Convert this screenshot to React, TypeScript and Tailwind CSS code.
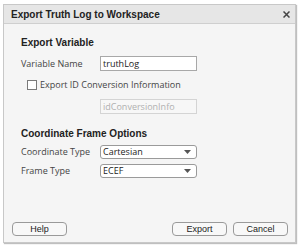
import React from "react";

function Caret() {
  return (
    <svg width="7" height="4" viewBox="0 0 7 4" className="shrink-0">
      <path d="M0 0 L7 0 L3.5 4 Z" fill="#555" />
    </svg>
  );
}

function Dropdown({ value }: { value: string }) {
  return (
    <div className="flex h-[14px] w-[97px] items-center justify-between rounded-[3px] border border-[#9a9a9a] bg-white pl-[2px] pr-[5px] text-[9px] leading-none text-[#222]">
      <span>{value}</span>
      <Caret />
    </div>
  );
}

function Button({ label, className = "" }: { label: string; className?: string }) {
  return (
    <div
      className={`flex h-[14px] w-[55px] items-center justify-center rounded-[4px] border border-[#9a9a9a] bg-[#f8f8f8] text-[9px] leading-none text-[#222] ${className}`}
    >
      {label}
    </div>
  );
}

export default function App() {
  return (
    <div className="h-[246px] w-[300px] bg-white pl-[3px] pt-[4px] [font-family:'Open_Sans','Liberation_Sans',sans-serif]">
      <div className="flex h-[239px] w-[293px] flex-col border border-[#c8c8c8] bg-[#f5f5f5] shadow-[1px_1px_1px_rgba(0,0,0,0.25)]">
        <div className="flex h-[19px] items-center justify-between border-b border-[#cfcfcf] bg-[#e6e6e6] pl-[7px] pr-[5px] [font-family:'Liberation_Sans',sans-serif]">
          <span className="text-[10px] font-bold text-[#222]">Export Truth Log to Workspace</span>
          <svg width="7" height="7" viewBox="0 0 7 7">
            <path d="M0.5 0.5 L6.5 6.5 M6.5 0.5 L0.5 6.5" stroke="#444" strokeWidth="1.5" />
          </svg>
        </div>

        <div className="flex flex-1 flex-col pl-[17px] pt-[14px]">
          <div className="text-[10px] font-bold leading-none text-[#222] [font-family:'Liberation_Sans',sans-serif]">
            Export Variable
          </div>
          <div className="mt-[8px] flex items-center">
            <span className="w-[79px] text-[9px] text-[#444]">Variable Name</span>
            <div className="flex h-[15px] w-[97px] items-center border border-[#a8a8a8] bg-white pl-[2px] text-[9px] leading-none text-[#222]">
              truthLog
            </div>
          </div>
          <div className="mt-[7px] flex items-center pl-[6px]">
            <div className="h-[10px] w-[10px] border border-[#7a7a7a] bg-white" />
            <span className="ml-[3px] text-[9px] text-[#444]">Export ID Conversion Information</span>
          </div>
          <div className="ml-[79px] mt-[7px] flex h-[15px] w-[97px] items-center border border-[#d4d4d4] bg-[#f7f7f7] pl-[2px] text-[9px] leading-none text-[#b0b0b0]">
            idConversionInfo
          </div>

          <div className="mt-[15px] text-[10px] font-bold leading-none text-[#222] [font-family:'Liberation_Sans',sans-serif]">
            Coordinate Frame Options
          </div>
          <div className="mt-[6px] flex items-center">
            <span className="w-[79px] text-[9px] text-[#444]">Coordinate Type</span>
            <Dropdown value="Cartesian" />
          </div>
          <div className="mt-[5px] flex items-center">
            <span className="w-[79px] text-[9px] text-[#444]">Frame Type</span>
            <Dropdown value="ECEF" />
          </div>
        </div>

        <div className="flex items-center pb-[6px] pl-[8px] pr-[7px] [font-family:'Liberation_Sans',sans-serif]">
          <Button label="Help" />
          <div className="flex-1" />
          <Button label="Export" />
          <Button label="Cancel" className="ml-[6px]" />
        </div>
      </div>
    </div>
  );
}
